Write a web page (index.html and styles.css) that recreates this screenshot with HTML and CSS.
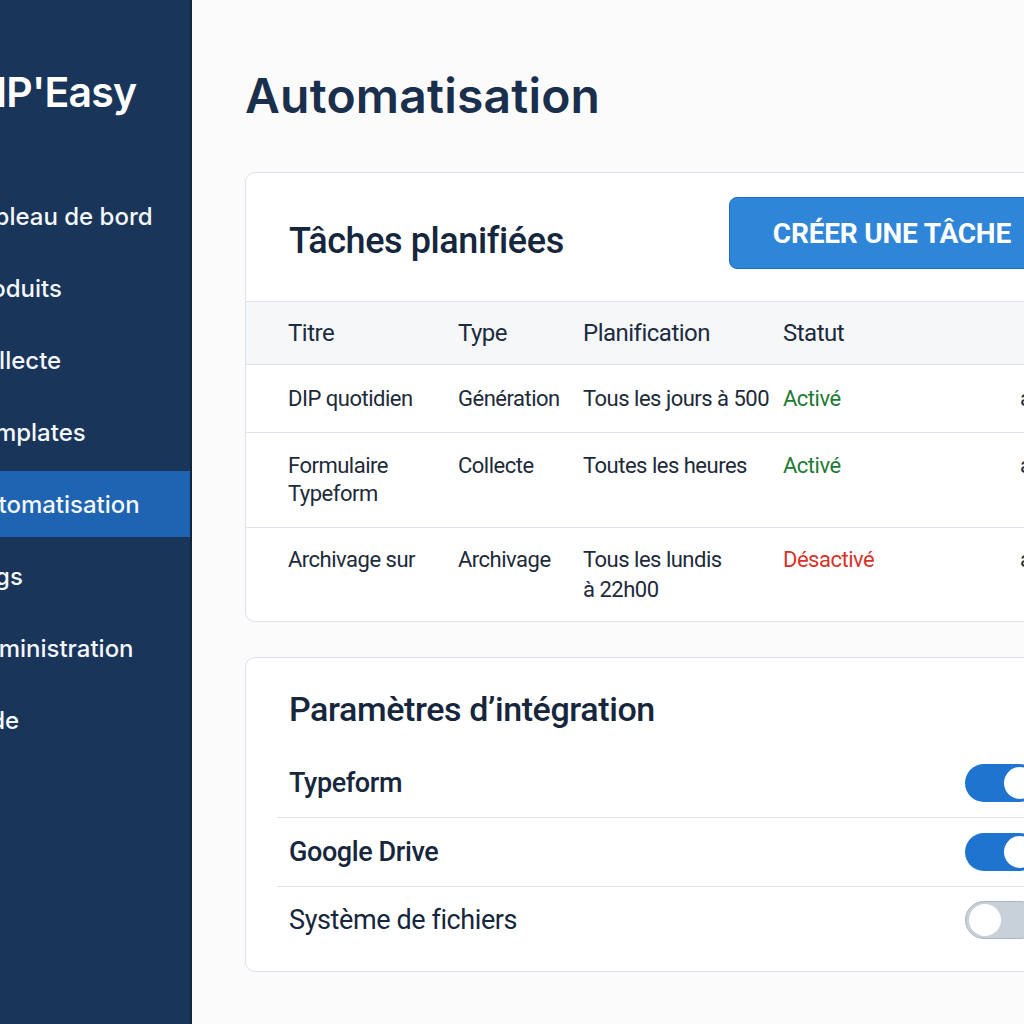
FILE: index.html
```html
<!DOCTYPE html>
<html lang="fr">
<head>
<meta charset="utf-8">
<title>DIP'Easy - Automatisation</title>
<link rel="stylesheet" href="styles.css">
</head>
<body>
<div class="app">
  <aside class="sidebar">
    <div class="sidebar-inner">
      <div class="logo">DIP'Easy</div>
      <nav class="nav">
        <div class="nav-item">Tableau de bord</div>
        <div class="nav-item">Produits</div>
        <div class="nav-item">Collecte</div>
        <div class="nav-item">Templates</div>
        <div class="nav-item active">Automatisation</div>
        <div class="nav-item">Logs</div>
        <div class="nav-item">Administration</div>
        <div class="nav-item">Aide</div>
      </nav>
    </div>
  </aside>
  <main class="main">
    <h1 class="page-title">Automatisation</h1>
    <section class="card tasks">
      <div class="card-head">
        <h2 class="card-title">Tâches planifiées</h2>
        <button class="btn-primary">CRÉER UNE TÂCHE</button>
      </div>
      <div class="table">
        <div class="trow thead">
          <div class="c1">Titre</div>
          <div class="c2">Type</div>
          <div class="c3">Planification</div>
          <div class="c4">Statut</div>
          <div class="c5"></div>
        </div>
        <div class="trow r1">
          <div class="c1">DIP quotidien</div>
          <div class="c2">Génération</div>
          <div class="c3">Tous les jours à 500</div>
          <div class="c4 on">Activé</div>
          <div class="c5">a</div>
        </div>
        <div class="trow r2">
          <div class="c1">Formulaire<br>Typeform</div>
          <div class="c2">Collecte</div>
          <div class="c3">Toutes les heures</div>
          <div class="c4 on">Activé</div>
          <div class="c5">a</div>
        </div>
        <div class="trow r3">
          <div class="c1">Archivage sur</div>
          <div class="c2">Archivage</div>
          <div class="c3">Tous les lundis<br>à 22h00</div>
          <div class="c4 off">Désactivé</div>
          <div class="c5">a</div>
        </div>
      </div>
    </section>
    <section class="card integrations">
      <h2 class="card-title int-title">Paramètres d’intégration</h2>
      <div class="int-list">
        <div class="int-row">
          <span class="int-label strong">Typeform</span>
          <span class="toggle on"><span class="knob"></span></span>
        </div>
        <div class="int-row">
          <span class="int-label strong">Google Drive</span>
          <span class="toggle on"><span class="knob"></span></span>
        </div>
        <div class="int-row">
          <span class="int-label">Système de fichiers</span>
          <span class="toggle off"><span class="knob"></span></span>
        </div>
      </div>
    </section>
  </main>
</div>
</body>
</html>
```

FILE: styles.css
```css
* { box-sizing: border-box; }
html, body {
  margin: 0;
  padding: 0;
  width: 1024px;
  height: 1024px;
  overflow: hidden;
  background: #fbfbfc;
  font-family: "Roboto", "Liberation Sans", sans-serif;
}
.app {
  display: flex;
  height: 1024px;
  width: 1200px;
}
.sidebar {
  width: 192px;
  flex: 0 0 192px;
  background: #19355a;
  border-right: 2px solid #112641;
  overflow: hidden;
  color: #ffffff;
}
.sidebar-inner {
  margin-left: -33px;
  width: 225px;
}
.logo {
  font-family: "Inter", "Liberation Sans", sans-serif;
  font-weight: 600;
  font-size: 41px;
  letter-spacing: -0.8px;
  height: 183px;
  padding-top: 64px;
  padding-left: 0;
  line-height: 56px;
}
.nav {
  display: flex;
  flex-direction: column;
  gap: 6px;
}
.nav-item {
  height: 66px;
  display: flex;
  align-items: center;
  font-family: "Inter", "Liberation Sans", sans-serif;
  font-size: 24px;
  font-weight: 500;
  color: #f4f7fb;
}
.nav-item.active {
  background: #1e64b2;
}
.main {
  flex: 1;
  padding: 56px 0 0 53px;
}
.page-title {
  margin: 0 0 36px 0;
  font-family: "Inter", "Liberation Sans", sans-serif;
  font-size: 48px;
  font-weight: 600;
  color: #1a2f4c;
  line-height: 80px;
  letter-spacing: 0.2px;
}
.card {
  width: 850px;
  background: #ffffff;
  border: 1.5px solid #dde1ea;
  border-radius: 10px;
}
.card-head {
  height: 128px;
  display: flex;
  align-items: center;
  justify-content: space-between;
  padding: 0 42px 0 43px;
}
.card-title {
  margin: 0;
  font-size: 36px;
  font-weight: 500;
  color: #15263d;
  letter-spacing: -0.4px;
  padding-top: 8px;
}
.btn-primary {
  height: 72px;
  margin-top: -8px;
  padding: 0 40px 0 43px;
  background: #2f86d8;
  border: 1.5px solid #1f6cc0;
  border-radius: 8px;
  color: #ffffff;
  font-family: "Roboto", "Liberation Sans", sans-serif;
  font-weight: 700;
  font-size: 28px;
  letter-spacing: -0.2px;
}
.table {
  font-size: 22px;
  color: #1d2a3a;
}
.trow {
  display: grid;
  grid-template-columns: 170px 125px 200px 237px 1fr;
  padding-left: 42px;
  border-top: 1.5px solid #e0e3ea;
  letter-spacing: -0.5px;
}
.thead {
  background: #f6f7f9;
  height: 63px;
  align-items: center;
  font-size: 24px;
  color: #1c2b40;
}
.r1 { height: 68px; align-items: center; }
.r2 { height: 95px; padding-top: 19px; line-height: 28px; }
.r3 { height: 94px; padding-top: 17px; line-height: 30px; }
.on { color: #1f7a35; }
.off { color: #d8332a; }
.c5 { color: #1d2a3a; }
.integrations {
  margin-top: 35px;
  padding: 29px 0 18px 31px;
}
.int-title {
  font-size: 34px;
  padding: 0 0 0 12px;
  margin-bottom: 18px;
  line-height: 44px;
}
.int-list {
  display: flex;
  flex-direction: column;
}
.int-row {
  display: flex;
  align-items: center;
  justify-content: space-between;
  height: 69px;
  padding: 0 55px 0 12px;
  border-bottom: 1.5px solid #e0e3ea;
}
.int-row:last-child {
  border-bottom: none;
  height: 66px;
}
.int-label {
  font-size: 27px;
  color: #16263c;
  letter-spacing: -0.4px;
}
.int-label.strong { font-weight: 500; }
.toggle {
  width: 74px;
  height: 38px;
  border-radius: 19px;
  display: flex;
  align-items: center;
  padding: 0 3px;
}
.toggle.on {
  background: #1f74d0;
  justify-content: flex-end;
}
.toggle.off {
  background: #c8d0da;
  border: 1.5px solid #a9b4c0;
  justify-content: flex-start;
}
.knob {
  width: 32px;
  height: 32px;
  border-radius: 50%;
  background: #ffffff;
}
```
